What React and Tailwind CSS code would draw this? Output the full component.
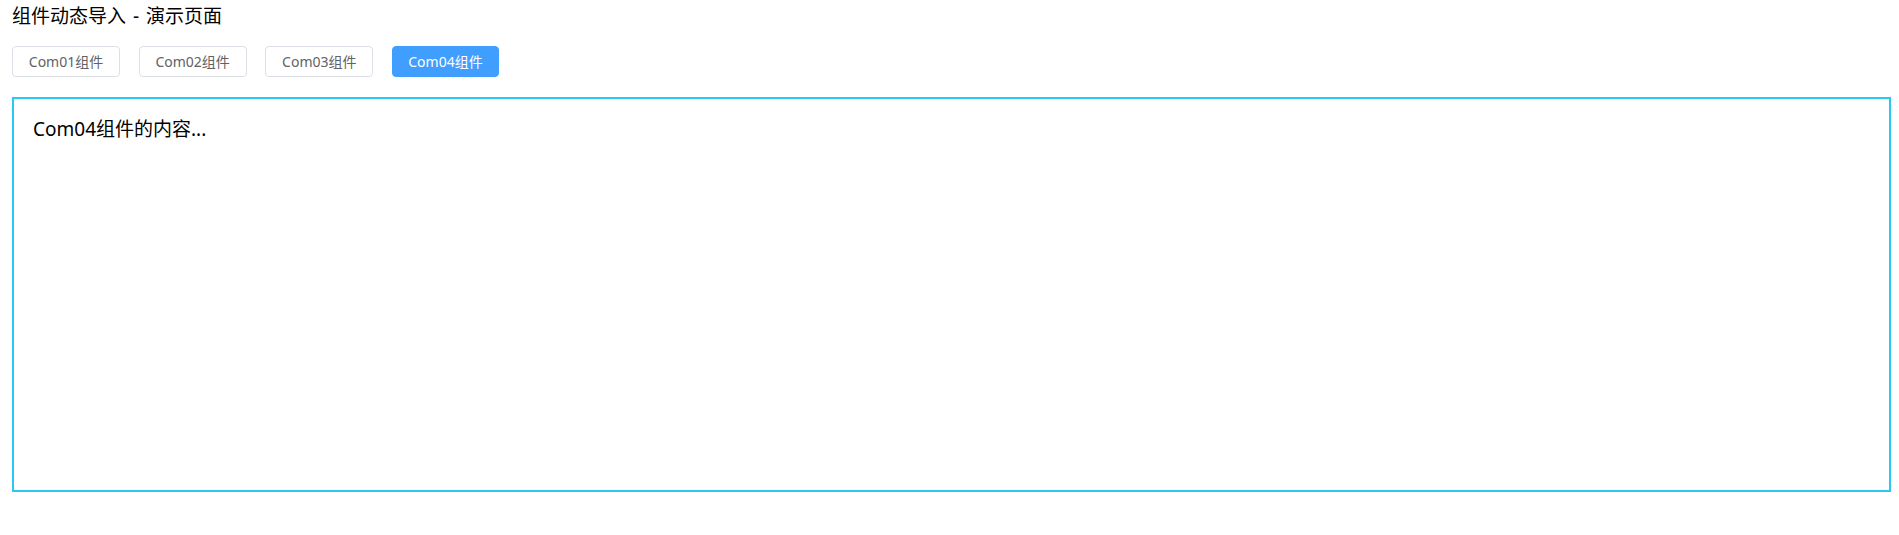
export default function App() {
  const tabs = ["Com01组件", "Com02组件", "Com03组件", "Com04组件"];
  const active = 3;
  return (
    <div
      className="w-[1899px] h-[535px] bg-white pl-[12px] pr-[8px]"
      style={{ fontFamily: '"Noto Sans", "Noto Sans CJK SC", sans-serif' }}
    >
      <div className="h-[32px] leading-[32px] text-[19px] text-black [word-spacing:2px]">
        组件动态导入 - 演示页面
      </div>
      <div className="mt-[14px] flex gap-[18.67px]">
        {tabs.map((t, i) => (
          <button
            key={t}
            className={
              i === active
                ? "h-[31px] w-[107px] rounded-[4px] border border-[#409eff] bg-[#409eff] text-[14px] text-white flex items-center justify-center"
                : "h-[31px] w-[108px] rounded-[4px] border border-[#dcdfe6] bg-white text-[14px] text-[#606266] flex items-center justify-center"
            }
          >
            {t}
          </button>
        ))}
      </div>
      <div className="mt-[20px] h-[395px] w-[1879px] border-2 border-[#2bc8f2] px-[19px] pt-[16px]">
        <div className="text-[19px] leading-[28px] text-black">Com04组件的内容...</div>
      </div>
    </div>
  );
}
